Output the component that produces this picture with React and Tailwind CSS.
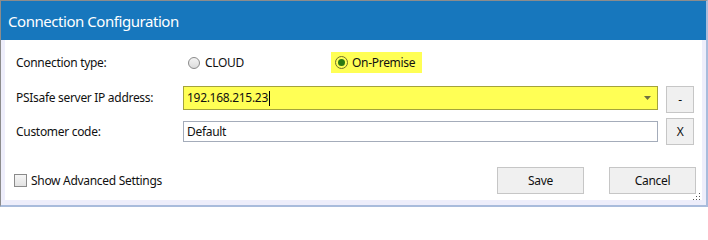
import React from "react";

const font = { fontFamily: '"Noto Sans", "Open Sans", sans-serif' };

function Btn({ children, className = "" }) {
  return (
    <div
      className={
        "flex items-center justify-center bg-[#f0f0f0] border border-[#c6c6c6] text-[12px] tracking-[-0.3px] text-[#111] " +
        className
      }
    >
      {children}
    </div>
  );
}

export default function App() {
  return (
    <div
      className="w-[708px] h-[207px] flex flex-col border-t border-l border-[#8c8c8c] border-r-2 border-r-[#a9bcdc] border-b-2 border-b-[#a9bcdc] bg-white overflow-hidden"
      style={font}
    >
      <div className="h-[39px] shrink-0 bg-[#1777bd] flex items-center pl-[7px] pt-[2px]">
        <span className="text-white text-[15px] tracking-[-0.45px] leading-none">Connection Configuration</span>
      </div>
      <div className="flex-1 flex flex-col bg-white border-l-4 border-r-4 border-b-[5px] border-[#eeeefb] pl-[11px] pr-[8px] text-[12px] tracking-[-0.3px] text-[#111]">
        {/* Row 1 */}
        <div className="mt-[12px] h-[21px] flex items-center">
          <div className="w-[167px]">Connection type:</div>
          <div className="flex items-center w-[148px] pl-[5px]">
            <span className="w-[12px] h-[12px] rounded-full border border-[#8a8a8a] bg-gradient-to-b from-[#f4f4f4] to-[#dcdcdc]" />
            <span className="ml-[5px]">CLOUD</span>
          </div>
          <div className="h-[21px] w-[91px] bg-[#ffff55] flex items-center pl-[4px]">
            <span className="w-[13px] h-[13px] rounded-full border border-[#6f6f2a] flex items-center justify-center">
              <span className="w-[7px] h-[7px] rounded-full bg-[#2c7a12]" />
            </span>
            <span className="ml-[4px]">On-Premise</span>
          </div>
        </div>
        {/* Row 2 */}
        <div className="mt-[13px] h-[27px] flex items-start">
          <div className="w-[167px] h-[24px] flex items-center">PSIsafe server IP address:</div>
          <div className="w-[475px] h-[24px] bg-[#ffff55] border border-[#a3a33c] flex items-center pl-[3px] pr-[6px]">
            <span className="flex-1 flex items-center">
              192.168.215.23<span className="inline-block w-px h-[15px] bg-black ml-[1px]" />
            </span>
            <svg width="7" height="4" viewBox="0 0 7 4">
              <path d="M0 0 H7 L3.5 4 Z" fill="#707040" />
            </svg>
          </div>
          <Btn className="ml-[8px] w-[28px] h-[27px]">-</Btn>
        </div>
        {/* Row 3 */}
        <div className="mt-[5px] h-[27px] flex items-center">
          <div className="w-[167px]">Customer code:</div>
          <div className="w-[475px] h-[21px] border border-[#a4acba] flex items-center pl-[3px]">Default</div>
          <Btn className="ml-[8px] w-[28px] h-[27px]">X</Btn>
        </div>
        {/* Bottom row */}
        <div className="mt-[22px] h-[27px] flex items-center">
          <div className="flex items-center -ml-[2px]">
            <span className="w-[13px] h-[13px] border border-[#8a8a8a] bg-gradient-to-b from-[#f6f6f6] to-[#e2e2e2]" />
            <span className="ml-[4px]">Show Advanced Settings</span>
          </div>
          <div className="flex-1" />
          <Btn className="w-[87px] h-[27px]">Save</Btn>
          <Btn className="ml-[25px] w-[87px] h-[27px] -mr-[2px]">Cancel</Btn>
        </div>
        <div className="flex-1 relative">
          <svg className="absolute right-[-7px] bottom-[-1px]" width="8" height="8" viewBox="0 0 8 8">
            <g fill="#555">
              <rect x="6" y="0" width="1" height="1" />
              <rect x="3" y="3" width="1" height="1" />
              <rect x="6" y="3" width="1" height="1" />
              <rect x="0" y="6" width="1" height="1" />
              <rect x="3" y="6" width="1" height="1" />
              <rect x="6" y="6" width="1" height="1" />
            </g>
          </svg>
        </div>
      </div>
    </div>
  );
}
